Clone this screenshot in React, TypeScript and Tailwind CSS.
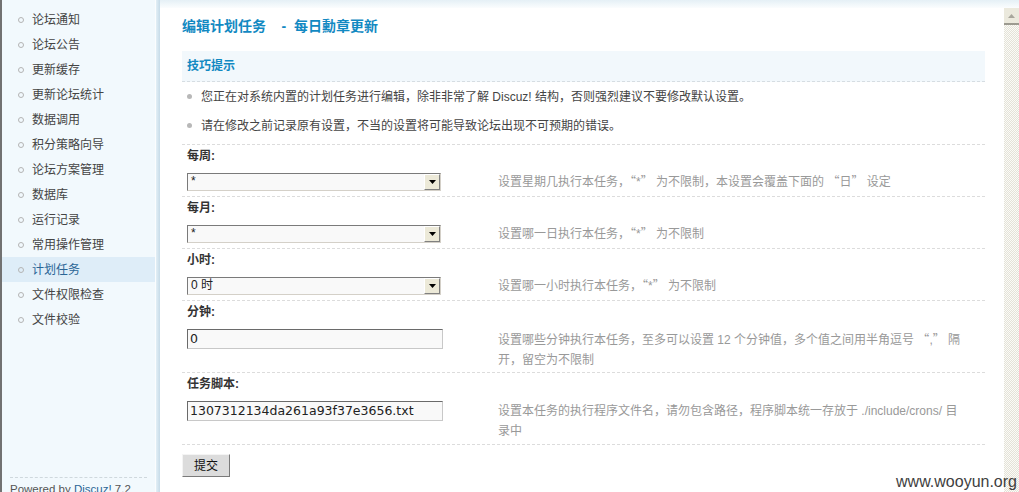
import React from "react";

const menu = [
  "论坛通知",
  "论坛公告",
  "更新缓存",
  "更新论坛统计",
  "数据调用",
  "积分策略向导",
  "论坛方案管理",
  "数据库",
  "运行记录",
  "常用操作管理",
  "计划任务",
  "文件权限检查",
  "文件校验",
];

const font = "font-['Liberation_Sans','Noto_Sans_CJK_SC',sans-serif]";

// wide CJK quotes as in the original rendering
function Q({ children }: { children: React.ReactNode }) {
  return <span className="font-['Noto_Sans_CJK_SC',sans-serif]">{children}</span>;
}

function Select({ value }: { value: string }) {
  return (
    <div className="flex h-[18px] w-[254px] border border-t-[#7a7a7a] border-l-[#7a7a7a] border-r-[#d4d0c8] border-b-[#d4d0c8] bg-[#f9f9f9]">
      <span className="flex-1 pl-[3px] text-[12px] leading-[15px] text-[#222]">{value}</span>
      <span className="flex w-[16px] items-center justify-center border border-t-[#fff] border-l-[#fff] border-r-[#808080] border-b-[#808080] bg-[#ece9d8]">
        <svg width="7" height="4" viewBox="0 0 7 4">
          <path d="M0 0h7L3.5 4z" fill="#000" />
        </svg>
      </span>
    </div>
  );
}

function Input({ value }: { value: string }) {
  return (
    <div className="h-[20px] w-[256px] border border-t-[#6a6a6a] border-l-[#6a6a6a] border-r-[#c8c8c8] border-b-[#c8c8c8] bg-[#f9f9f9] pl-[2px] font-['DejaVu_Sans',sans-serif] text-[12.5px] leading-[18px] text-[#222]">
      {value}
    </div>
  );
}

function Field({
  label,
  control,
  desc,
  tall,
}: {
  label: string;
  control: React.ReactNode;
  desc: React.ReactNode;
  tall?: boolean;
}) {
  return (
    <div className="border-b border-dashed border-[#dcdcdc]">
      <div className="h-[22px] pl-[5px] text-[12px] font-bold leading-[22px] text-[#333]">{label}</div>
      <div className={`flex ${tall ? "h-[49px] items-start pt-[6px]" : "h-[29px] items-center"}`}>
        <div className="w-[316px] pl-[5px]">{control}</div>
        <div className="flex-1 text-[12px] leading-[20px] text-[#999]">{desc}</div>
      </div>
    </div>
  );
}

export default function App() {
  return (
    <div className={`relative flex h-[492px] w-[1019px] overflow-hidden bg-white ${font}`}>
      {/* sidebar */}
      <div className="flex w-[160px] shrink-0">
        <div className="flex flex-1 flex-col border-l-2 border-[#727272] bg-[#f2f9fd]">
          <ul className="pt-[7px]">
            {menu.map((m) => {
              const active = m === "计划任务";
              return (
                <li
                  key={m}
                  className={`flex h-[25px] items-center text-[12px] ${active ? "bg-[#deedf8] text-[#2a6596]" : "text-[#444]"}`}
                >
                  <span className="ml-[16px] mr-[8px] h-[6px] w-[6px] rounded-full border border-[#b4b4b4]" />
                  {m}
                </li>
              );
            })}
          </ul>
          <div className="mx-[8px] mt-[145px] border-t border-dashed border-[#cfd8dd] pt-[3px] text-[11.5px] leading-[16px] text-[#555]">
            Powered by <span className="text-[#2a6596]">Discuz!</span> 7.2
          </div>
        </div>
        <div className="w-[1px] bg-[#fbfdfe]" />
        <div className="w-[4px] bg-gradient-to-r from-[#e3eff6] to-[#c6dbe8]" />
      </div>

      {/* main */}
      <div className="flex flex-1 flex-col">
        <div className="h-[8px] bg-gradient-to-b from-[#e5f0f6] to-[#fbfdfe]" />
        <div className="flex flex-1">
          <div className="flex-1 pl-[22px] pr-[19px]">
            <h1 className="mt-[8px] text-[14px] font-bold leading-[20px] text-[#1289c2]">
              编辑计划任务&nbsp;&nbsp;&nbsp;&nbsp;-&nbsp;&nbsp;每日勳章更新
            </h1>

            <div className="mt-[15px]">
              <div className="h-[31px] border-b border-dashed border-[#d6dde2] bg-[#f2f8fc] pl-[5px] text-[12px] font-bold leading-[30px] text-[#1289c2]">
                技巧提示
              </div>
              <ul className="text-[12px] text-[#444]">
                <li className="flex h-[29px] items-center">
                  <span className="ml-[5px] mr-[9px] h-[5px] w-[5px] rounded-full bg-[#b8b8b8]" />
                  您正在对系统内置的计划任务进行编辑，除非非常了解 Discuz! 结构，否则强烈建议不要修改默认设置。
                </li>
                <li className="flex h-[29px] items-center">
                  <span className="ml-[5px] mr-[9px] h-[5px] w-[5px] rounded-full bg-[#b8b8b8]" />
                  请在修改之前记录原有设置，不当的设置将可能导致论坛出现不可预期的错误。
                </li>
              </ul>
            </div>

            <div className="mt-[4px] border-t border-dashed border-[#dcdcdc]">
              <Field
                label="每周:"
                control={<Select value="*" />}
                desc={
                  <>
                    设置星期几执行本任务，<Q>“</Q>*<Q>”</Q> 为不限制，本设置会覆盖下面的 <Q>“</Q>日<Q>”</Q> 设定
                  </>
                }
              />
              <Field
                label="每月:"
                control={<Select value="*" />}
                desc={
                  <>
                    设置哪一日执行本任务，<Q>“</Q>*<Q>”</Q> 为不限制
                  </>
                }
              />
              <Field
                label="小时:"
                control={<Select value="0 时" />}
                desc={
                  <>
                    设置哪一小时执行本任务，<Q>“</Q>*<Q>”</Q> 为不限制
                  </>
                }
              />
              <Field
                label="分钟:"
                tall
                control={<Input value="0" />}
                desc={
                  <>
                    设置哪些分钟执行本任务，至多可以设置 12 个分钟值，多个值之间用半角逗号 <Q>“</Q>,<Q>”</Q> 隔
                    <br />
                    开，留空为不限制
                  </>
                }
              />
              <Field
                label="任务脚本:"
                tall
                control={<Input value="1307312134da261a93f37e3656.txt" />}
                desc={
                  <>
                    设置本任务的执行程序文件名，请勿包含路径，程序脚本统一存放于 ./include/crons/ 目
                    <br />
                    录中
                  </>
                }
              />
            </div>

            <button className="mt-[9px] h-[23px] w-[48px] border border-t-[#f4f4f4] border-l-[#f4f4f4] border-r-[#7a7a7a] border-b-[#7a7a7a] bg-[#dcdcdc] text-[12px] text-[#111]">
              提交
            </button>
          </div>

          {/* scrollbar */}
          <div className="flex w-[15px] flex-col bg-[repeating-conic-gradient(#e4e2d8_0%_25%,#fbfbf7_0%_50%)] bg-[length:2px_2px]">
            <div className="flex h-[17px] items-center justify-center border-b-2 border-[#9c9a90] bg-[#ebe9dd]">
              <svg width="7" height="4" viewBox="0 0 7 4">
                <path d="M3.5 0L7 4H0z" fill="#a8a69c" />
              </svg>
            </div>
          </div>
        </div>
      </div>

      <div className="absolute bottom-[1px] right-[2px] font-['Liberation_Sans',sans-serif] text-[16px] leading-[18px] text-[#3f3f3f]">
        www.wooyun.org
      </div>
    </div>
  );
}
